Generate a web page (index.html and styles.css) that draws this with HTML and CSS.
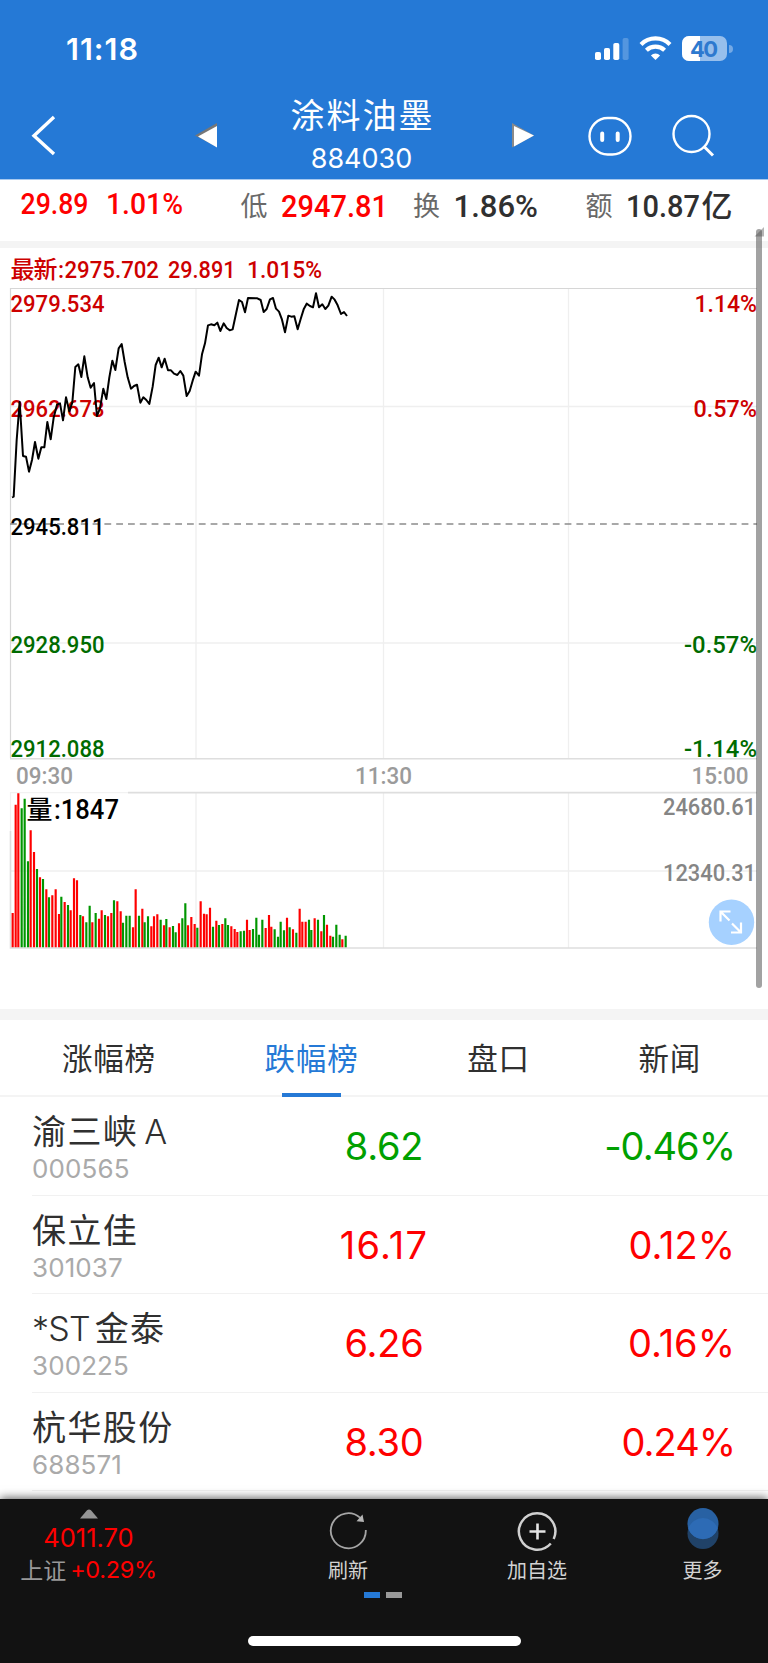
FILE: index.html
```html
<!DOCTYPE html>
<html lang="zh-CN">
<head>
<meta charset="utf-8">
<title>涂料油墨 884030</title>
<link rel="stylesheet" href="styles.css">
</head>
<body>
<header class="header">
  <div class="status">
    <span class="clock">11:18</span>
    <svg class="status-icons" viewBox="0 0 140 30" width="140" height="30">
      <g fill="#fff">
        <rect x="1" y="17" width="6" height="8" rx="1.8"/>
        <rect x="10" y="13" width="6" height="12" rx="1.8"/>
        <rect x="19.3" y="8" width="6" height="17" rx="1.8"/>
        <rect x="28.6" y="3" width="6" height="22" rx="1.8" opacity=".22"/>
      </g>
      <g fill="none" stroke="#fff" stroke-width="4.2">
        <path d="M47 9.4a20.4 20.4 0 0 1 29 0"/>
        <path d="M52.4 15.2a13.2 13.2 0 0 1 18.200 0"/>
      </g>
      <path d="M61.500 25l-4.600-4.600a6.600 6.600 0 0 1 9.200 0z" fill="#fff"/>
      <rect x="88" y="1" width="45" height="25" rx="7" fill="#97bfec"/>
      <path d="M95 1h11v25h-11a7 7 0 0 1-7-7v-11a7 7 0 0 1 7-7z" fill="#fff"/>
      <path d="M135 10a4 4 0 0 1 0 8z" fill="#74a9e5"/>
      <text class="battery" x="110" y="21.500" text-anchor="middle" textLength="28">40</text>
    </svg>
  </div>
  <nav class="titlebar">
    <svg class="back" viewBox="0 0 30 44" width="30" height="44"><path d="M25 4L5 22.700L25 41" fill="none" stroke="#fff" stroke-width="3.400"/></svg>
    <svg class="prev" viewBox="0 0 26 28" width="26" height="28"><path d="M1 13.500L23 1V25Z" fill="#777"/><path d="M4 14.500L23 4V25.500Z" fill="#fff"/></svg>
    <div class="title"><h1>涂料油墨</h1><span>884030</span></div>
    <svg class="next" viewBox="0 0 26 28" width="26" height="28"><path d="M1 1L23 13.500L1 25.500Z" fill="#8a8a8a"/><path d="M3 4L23 13.500L3 24.500Z" fill="#fff"/></svg>
    <svg class="robot" viewBox="0 0 44 42" width="44" height="42"><rect x="1.500" y="3" width="41" height="36.500" rx="18.200" fill="none" stroke="#fff" stroke-width="2.400"/><path d="M14.200 18.500v6.500M29.700 18.500v6.500" stroke="#fff" stroke-width="4" stroke-linecap="round"/></svg>
    <svg class="search" viewBox="0 0 44 44" width="44" height="44"><circle cx="20.500" cy="20" r="18" fill="none" stroke="#fff" stroke-width="2.400"/><path d="M32.500 32L42 41.500" stroke="#fff" stroke-width="3"/></svg>
  </nav>
</header>

<svg class="quote" viewBox="0 179 768 62" width="768" height="62">
  <path d="M0 179.500H768" stroke="#a8c9ef"/>
  <g class="din up" font-size="29">
    <text x="20.500" y="213.700" textLength="68" lengthAdjust="spacingAndGlyphs">29.89</text>
    <text x="106" y="213.700" textLength="77" lengthAdjust="spacingAndGlyphs">1.01%</text>
  </g>
  <g class="din" font-size="31">
    <text class="up" x="281" y="217" textLength="107" lengthAdjust="spacingAndGlyphs">2947.81</text>
    <text x="453.500" y="217" textLength="84.500" lengthAdjust="spacingAndGlyphs">1.86%</text>
    <text x="626" y="217" textLength="74" lengthAdjust="spacingAndGlyphs">10.87</text>
    <text x="701.500" y="217" font-size="31">亿</text>
  </g>
  <g class="cap" font-size="27">
    <text x="240.500" y="216">低</text><text x="413" y="216">换</text><text x="585.500" y="216">额</text>
  </g>
</svg>

<div class="band"></div>

<main class="chart">
  <svg viewBox="0 248 768 761" width="768" height="761">
    <g fill="none" stroke="#efefef" stroke-width="1.300">
      <path d="M11 406.500H757M11 643H757M11 871H757"/>
      <path d="M196 289V758M383.500 289V758M568.500 289V758M196 793V948M383.500 793V948M568.500 793V948"/>
    </g>
    <path d="M10.500 758V288.500H757" fill="none" stroke="#d6d6d6" stroke-width="1.200"/>
    <path d="M10 758.700H757M128 792.600H757M10.500 831V948H757" fill="none" stroke="#dedede" stroke-width="1.600"/>
    <path d="M128 792.600H10.500V831" fill="none" stroke="#f2f2f2" stroke-width="1.200"/>
    <path d="M10 524H757" stroke="#8c8c8c" stroke-width="1.600" stroke-dasharray="6.800 5"/>
    <g class="din" font-size="23">
      <g class="crimson">
        <text class="cjk" x="10.500" y="278" font-size="24" textLength="47">最新</text>
        <text x="58" y="278">:</text>
        <text x="64.500" y="278" textLength="94.500" lengthAdjust="spacingAndGlyphs">2975.702</text>
        <text x="168" y="278" textLength="67.500" lengthAdjust="spacingAndGlyphs">29.891</text>
        <text x="247" y="278" textLength="75" lengthAdjust="spacingAndGlyphs">1.015%</text>
        <text x="10.500" y="311.500" textLength="94" lengthAdjust="spacingAndGlyphs">2979.534</text>
        <text x="10.500" y="416.500" textLength="94" lengthAdjust="spacingAndGlyphs">2962.673</text>
        <text x="694.500" y="311.500" textLength="62.500" lengthAdjust="spacingAndGlyphs">1.14%</text>
        <text x="693.500" y="416.500" textLength="63.500" lengthAdjust="spacingAndGlyphs">0.57%</text>
      </g>
      <text class="black" x="10.500" y="534.500" textLength="94" lengthAdjust="spacingAndGlyphs">2945.811</text>
      <g class="green">
        <text x="10.500" y="652.700" textLength="94" lengthAdjust="spacingAndGlyphs">2928.950</text>
        <text x="10.500" y="757" textLength="94" lengthAdjust="spacingAndGlyphs">2912.088</text>
        <text x="684" y="652.700" textLength="73" lengthAdjust="spacingAndGlyphs">-0.57%</text>
        <text x="684" y="757" textLength="73" lengthAdjust="spacingAndGlyphs">-1.14%</text>
      </g>
      <g class="time">
        <text x="16" y="784" textLength="57" lengthAdjust="spacingAndGlyphs">09:30</text>
        <text x="355" y="784" textLength="57" lengthAdjust="spacingAndGlyphs">11:30</text>
        <text x="691.500" y="784" textLength="57" lengthAdjust="spacingAndGlyphs">15:00</text>
      </g>
      <g class="scale">
        <text x="663" y="815" textLength="93" lengthAdjust="spacingAndGlyphs">24680.61</text>
        <text x="663" y="880.700" textLength="93" lengthAdjust="spacingAndGlyphs">12340.31</text>
      </g>
    </g>
    <path transform="translate(0 240) scale(.33333)" fill="none" stroke="#000" stroke-width="6" stroke-linejoin="round" d="M36 772L41 770L50 600L59 486L69 648L78 650L87 695L96 660L105 606L115 656L124 622L133 622L142 546L152 598L161 533L171 494L180 490L189 541L198 472L208 514L217 487L226 381L235 373L244 411L253 349L263 412L272 443L282 429L291 528L300 505L310 446L319 477L328 412L337 362L346 390L356 325L365 312L374 366L383 412L393 446L402 438L411 434L421 488L430 472L439 480L448 492L458 440L467 375L476 353L485 382L494 356L504 391L513 391L522 401L532 405L541 393L550 407L560 468L569 453L578 422L587 395L597 407L606 343L615 310L624 256L633 253L643 256L652 248L661 273L671 250L680 264L689 271L698 268L707 226L717 180L726 186L735 217L744 174L772 175L782 180L791 216L800 207L810 178L819 174L828 206L837 215L846 239L855 277L865 227L874 230L883 229L893 268L902 237L911 208L920 191L930 198L939 202L948 160L957 202L967 193L976 207L985 197L995 170L1004 179L1013 196L1023 222L1032 216L1041 228"/>
    <g id="volume" transform="translate(0 760) scale(.33333)" stroke-width="6.500"></g>
    <text class="din black cjk" x="26.500" y="819" font-size="26">量</text>
    <text class="din black" x="54" y="819.300" font-size="27" textLength="65" lengthAdjust="spacingAndGlyphs">:1847</text>
    <circle cx="731.500" cy="922.300" r="22.700" fill="#a6d1ff"/>
    <path d="M720.500 921.500V911.500H730.500M721 912L729.500 920.500M741 922.500V932.500H731M740.500 932L732 923.500" fill="none" stroke="#fff" stroke-width="2.200"/>
    <path d="M754.500 236.500L764 227V236.500Z" fill="#b5b5b5"/>
  </svg>
  <div class="scrollbar"></div>
</main>

<div class="band tall"></div>

<nav class="tabs">
  <span>涨幅榜</span><span class="active">跌幅榜</span><span>盘口</span><span>新闻</span>
</nav>

<section class="list">
  <div class="row down"><div class="name"><b>渝三峡<i>A</i></b><small>000565</small></div><span class="price">8.62</span><span class="pct">-0.46%</span></div>
  <div class="row"><div class="name"><b>保立佳</b><small>301037</small></div><span class="price wide">16.17</span><span class="pct wide">0.12%</span></div>
  <div class="row"><div class="name"><b><em>*ST</em>金泰</b><small>300225</small></div><span class="price">6.26</span><span class="pct wide">0.16%</span></div>
  <div class="row"><div class="name"><b>杭华股份</b><small>688571</small></div><span class="price">8.30</span><span class="pct">0.24%</span></div>
</section>

<footer class="footer">
  <div class="bar">
    <div class="index">
      <svg viewBox="0 0 18 10" width="18" height="10"><path d="M0 9.500L7 1.300Q9-.5 11 1.300L18 9.500Z" fill="#959595"/></svg>
      <span class="value">4011.70</span>
      <span class="change"><span>上证</span>+0.29%</span>
    </div>
    <div class="tool">
      <svg viewBox="0 0 42 42" width="42" height="42"><path d="M38.800 19A17.500 17.500 0 1 1 33 6.700" fill="none" stroke="#a5a5a5" stroke-width="1.800"/><path d="M35.500 3.500L37 11L29.500 10.200Z" fill="#b5b5b5"/></svg>
      <span>刷新</span>
    </div>
    <div class="tool">
      <svg viewBox="0 0 42 42" width="42" height="42"><path d="M37.700 28A18.200 18.200 0 1 0 34.800 32.500" fill="none" stroke="#d0d0d0" stroke-width="2.500"/><path d="M13.500 20.500H29.500M21.500 12.500V28.500" stroke="#e4e4e4" stroke-width="2.600"/></svg>
      <span>加自选</span>
    </div>
    <div class="tool more">
      <svg viewBox="0 0 42 42" width="42" height="42"><circle cx="21" cy="22.500" r="15.500" fill="#204268"/><circle cx="21" cy="12.600" r="15.500" fill="#2861a3"/><path d="M6.300 17.550A15.500 15.500 0 0 1 35.700 17.550A15.500 15.500 0 0 1 6.300 17.550Z" fill="#2d6bb5"/></svg>
      <span>更多</span>
    </div>
  </div>
  <div class="pages"><i></i><i></i></div>
  <div class="home"></div>
</footer>
<script src="chart.js"></script>
</body>
</html>
```
FILE: styles.css
```css
* { box-sizing: border-box; }
body { margin: 0; width: 768px; height: 1663px; overflow: hidden; background: #fff; color: #303030; font-family: Inter, "Noto Sans CJK SC", sans-serif; }
svg { display: block; flex: none; }
.header { height: 179px; background: #2579d6; color: #fff; }
.status { height: 97px; padding: 35px 34px 0 66px; display: flex; justify-content: space-between; align-items: flex-start; }
.clock { font-size: 30.500px; line-height: 28px; font-weight: 600; letter-spacing: 1px; }
.battery { font: 700 22px Inter, sans-serif; fill: #2d79cf; }
.titlebar { height: 82px; display: flex; align-items: flex-start; }
.back { margin: 16px 0 0 29px; }
.prev { margin: 25px 0 0 135px; }
.title { width: 283px; text-align: center; }
.title h1 { margin: -2px 0 0; font: 400 34px/38px "Noto Sans CJK SC", sans-serif; letter-spacing: 2px; text-indent: 2px; }
.title span { display: block; margin-top: 11px; font-size: 27px; line-height: 30px; }
.next { margin: 25px 0 0 8px; }
.robot { margin: 18px 0 0 51px; }
.search { margin: 17px 0 0 39px; }
.din { font-family: Roboto, "Noto Sans CJK SC", sans-serif; font-weight: 500; fill: #303030; }
.cjk { font-family: "Noto Sans CJK SC", sans-serif; font-weight: 500; }
.cap { font-family: "Noto Sans CJK SC", sans-serif; font-weight: 400; fill: #696969; }
.up, .up text { fill: #fe0000; }
.crimson { fill: #cd0000; }
.black { fill: #000; }
.green { fill: #006b00; }
.time { fill: #9b9b9b; font-weight: 500; }
.scale { fill: #858585; font-weight: 500; }
.band { height: 7px; background: #f4f4f4; }
.band.tall { height: 11px; }
.chart { position: relative; height: 761px; }
.chart svg { overflow: visible; }
.scrollbar { position: absolute; left: 756px; top: -19px; width: 6px; height: 759px; border-radius: 3px; background: rgba(70, 70, 70, .5); }
.tabs { height: 77px; display: flex; justify-content: space-between; padding: 0 67px 0 62px; border-bottom: 2px solid #f4f4f4; }
.tabs span { position: relative; font: 400 30.500px/75px "Noto Sans CJK SC", sans-serif; letter-spacing: .8px; }
.tabs .active { color: #2579d6; }
.tabs .active::after { content: ""; position: absolute; left: 17px; bottom: -2px; width: 59px; height: 4px; background: #2579d6; }
.list { height: 402px; overflow: hidden; }
.row { height: 98.500px; margin-left: 32px; padding-right: 33px; display: grid; grid-template-columns: 200px 304px 1fr; border-bottom: 1px solid #f1f1f1; color: #fe0000; }
.row.down { color: #00a000; }
.name { color: #303030; }
.name b { display: block; margin-top: 13px; font: 400 34px/44px Inter, "Noto Sans CJK SC", sans-serif; letter-spacing: 1.400px; }
.name i, .name em { font-style: normal; font-weight: 350; letter-spacing: -.8px; }
.name i { margin-left: 6px; }
.name em { margin-right: 5px; }
.name small { display: block; margin-top: 0; font-size: 26px; line-height: 30px; color: #aaa; font-weight: 400; letter-spacing: .1px; }
.price, .pct { font-size: 38px; line-height: 46px; margin-top: 26px; }
.price { text-align: center; letter-spacing: -.2px; }
.price.wide { letter-spacing: 1.200px; }
.pct { text-align: right; letter-spacing: -1px; }
.pct.wide { letter-spacing: 0; }
.footer { position: relative; height: 164px; background: #121212; box-shadow: 0 -1px 9px rgba(0,0,0,.65); color: #d2d2d2; }
.bar { height: 93px; display: grid; grid-template-columns: 177px 342px 36px 1fr; }
.index { display: flex; flex-direction: column; align-items: center; padding-top: 10px; color: #fe0000; }
.value { margin-top: 3px; font-size: 25.500px; line-height: 32px; }
.change { margin-top: 1px; display: flex; font-size: 23.500px; line-height: 30px; letter-spacing: -.3px; white-space: nowrap; }
.change span { margin-right: 4px; color: #999; font: 400 23px/29px "Noto Sans CJK SC", sans-serif; letter-spacing: 0; }
.tool { display: flex; flex-direction: column; align-items: center; padding-top: 12px; font: 400 20px/26px "Noto Sans CJK SC", sans-serif; white-space: nowrap; }
.tool span { margin-top: 4px; }
.tool svg { overflow: visible; }
.more { margin-left: 82px; }
.pages { display: flex; gap: 6px; padding-left: 364px; }
.pages i { width: 16px; height: 6px; background: #999; }
.pages i:first-child { background: #2579d6; }
.home { width: 273px; height: 10px; margin: 38px auto 0; border-radius: 5px; background: #fff; }
```
FILE: chart.js
```js
// Per-minute volume: x, top edge, r = rising / g = falling
const bars = "38,459r 47,134r 55,100r 65,145g 74,116g 84,304g 92,211r 102,276r 111,327g 120,352r 129,357g 139,388r 147,412g 157,406r 167,388r 177,462r 184,410g 194,426r 204,435g 212,451r 222,355r 231,361r 241,465g 249,469r 259,487g 269,437g 277,487r 287,459g 297,476r 305,451r 315,465g 324,469r 334,459r 342,421g 352,424r 362,454r 369,488g 379,467g 389,467g 399,502r 407,388r 417,467g 427,446r 434,487g 444,469g 454,499r 462,469r 472,463r 482,479g 492,496r 499,477g 509,502r 519,498g 527,517g 537,490r 547,475g 556,430g 564,496r 574,471r 584,492r 592,503g 602,424r 612,461r 620,463r 630,443r 639,500g 649,482r 657,495g 667,492r 676,475g 684,495g 694,499r 704,507r 712,516r 722,514g 732,512g 741,479r 749,510r 759,507g 769,473g 777,524g 787,479g 797,504r 807,465r 814,500r 824,508g 834,530g 842,485g 852,511g 861,473r 869,502g 879,508r 889,518g 899,446r 907,485r 917,485r 927,479g 934,510g 944,475r 954,479g 964,514r 972,465g 981,494r 991,527r 999,530g 1009,494g 1019,524g 1027,538r 1037,527g";
const paths = { r: "", g: "" };
for (const bar of bars.split(" ")) {
  const [, x, y, side] = bar.match(/(\d+),(\d+)([rg])/);
  paths[side] += `M${x} 562V${y}`;
}
document.getElementById("volume").innerHTML =
  `<path stroke="#fe0000" d="${paths.r}"/><path stroke="#009600" d="${paths.g}"/>`;
```
